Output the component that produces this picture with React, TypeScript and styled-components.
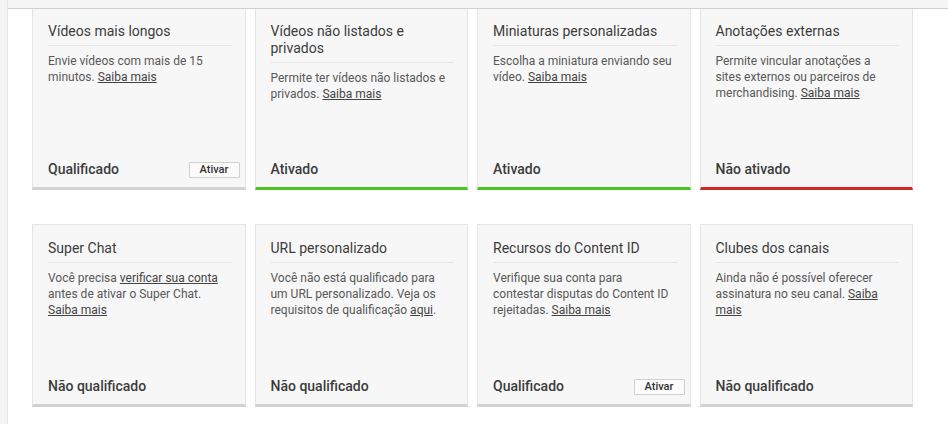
import { ReactElement } from 'react';
import styled, { createGlobalStyle } from 'styled-components';

const GlobalStyle = createGlobalStyle`
  html, body {
    margin: 0;
    padding: 0;
    background: #ffffff;
    font-family: Roboto, "Noto Sans", Arial, sans-serif;
  }
`;

const Page = styled.div`
  display: flex;
  min-height: 424px;
`;

const SideStrip = styled.div`
  width: 7px;
  flex: none;
  background: #f4f4f4;
  border-right: 1px solid #e6e6e6;
`;

const Main = styled.div`
  flex: 1;
  display: flex;
  flex-direction: column;
`;

const TopBar = styled.div`
  height: 8px;
  background: #f5f5f5;
  border-bottom: 1px solid #cfcfcf;
  margin-bottom: -2px;
  position: relative;
  z-index: 1;
`;

const Grid = styled.div`
  display: grid;
  grid-template-columns: repeat(4, 1fr);
  column-gap: 9px;
  row-gap: 34px;
  width: 881px;
  margin-left: 24px;
`;

type Tone = 'none' | 'on' | 'off';

const barColor = (tone: Tone): string =>
  tone === 'on' ? '#4cc423' : tone === 'off' ? '#d12a26' : '#d2d2d2';

const Card = styled.div<{ $tone: Tone }>`
  box-sizing: border-box;
  height: 183px;
  display: flex;
  flex-direction: column;
  background: #f7f7f7;
  border: 1px solid #e4e4e4;
  border-bottom: 3px solid ${({ $tone }) => barColor($tone)};
  padding: 15px 13px 0 15px;
`;

const Title = styled.div`
  font-size: 14px;
  line-height: 17px;
  color: #3c3c3c;
  padding-bottom: 5px;
  border-bottom: 1px solid #e4e4e4;
`;

const Desc = styled.div`
  margin-top: 7px;
  padding-right: 3px;
  font-size: 12px;
  line-height: 16px;
  color: #585858;

  a {
    color: #444444;
    text-decoration: underline;
    text-underline-offset: 1px;
  }
`;

const Footer = styled.div`
  margin-top: auto;
  height: 36px;
  display: flex;
  align-items: center;
  justify-content: space-between;
`;

const Status = styled.span`
  font-size: 14px;
  font-weight: 500;
  color: #3c3c3c;
`;

const ActivateButton = styled.button`
  box-sizing: border-box;
  width: 51px;
  height: 16px;
  margin-right: -8px;
  margin-top: 1px;
  padding: 0;
  background: #fbfbfb;
  border: 1px solid #d0d0d0;
  border-radius: 1px;
  font-family: Roboto, Arial, sans-serif;
  font-size: 11px;
  font-weight: 500;
  color: #333333;
  cursor: pointer;
`;

type Feature = {
  title: string;
  desc: ReactElement;
  status: string;
  tone: Tone;
  action?: boolean;
};

const link = (text: string): ReactElement => <a href="#">{text}</a>;

const features: Feature[] = [
  {
    title: 'Vídeos mais longos',
    desc: <>Envie vídeos com mais de 15 minutos. {link('Saiba mais')}</>,
    status: 'Qualificado',
    tone: 'none',
    action: true,
  },
  {
    title: 'Vídeos não listados e privados',
    desc: <>Permite ter vídeos não listados e privados. {link('Saiba mais')}</>,
    status: 'Ativado',
    tone: 'on',
  },
  {
    title: 'Miniaturas personalizadas',
    desc: <>Escolha a miniatura enviando seu vídeo. {link('Saiba mais')}</>,
    status: 'Ativado',
    tone: 'on',
  },
  {
    title: 'Anotações externas',
    desc: (
      <>
        Permite vincular anotações a sites externos ou parceiros de merchandising.{' '}
        {link('Saiba mais')}
      </>
    ),
    status: 'Não ativado',
    tone: 'off',
  },
  {
    title: 'Super Chat',
    desc: (
      <>
        Você precisa {link('verificar sua conta')} antes de ativar o Super Chat.{' '}
        {link('Saiba mais')}
      </>
    ),
    status: 'Não qualificado',
    tone: 'none',
  },
  {
    title: 'URL personalizado',
    desc: (
      <>
        Você não está qualificado para um URL personalizado. Veja os requisitos de
        qualificação {link('aqui')}.
      </>
    ),
    status: 'Não qualificado',
    tone: 'none',
  },
  {
    title: 'Recursos do Content ID',
    desc: (
      <>
        Verifique sua conta para contestar disputas do Content ID rejeitadas.{' '}
        {link('Saiba mais')}
      </>
    ),
    status: 'Qualificado',
    tone: 'none',
    action: true,
  },
  {
    title: 'Clubes dos canais',
    desc: (
      <>
        Ainda não é possível oferecer assinatura no seu canal. {link('Saiba mais')}
      </>
    ),
    status: 'Não qualificado',
    tone: 'none',
  },
];

const FeatureCard = ({ feature }: { feature: Feature }): ReactElement => (
  <Card $tone={feature.tone}>
    <Title>{feature.title}</Title>
    <Desc>{feature.desc}</Desc>
    <Footer>
      <Status>{feature.status}</Status>
      {feature.action && <ActivateButton>Ativar</ActivateButton>}
    </Footer>
  </Card>
);

export default function App(): ReactElement {
  return (
    <>
      <GlobalStyle />
      <Page>
        <SideStrip />
        <Main>
          <TopBar />
          <Grid>
            {features.map((f) => (
              <FeatureCard key={f.title} feature={f} />
            ))}
          </Grid>
        </Main>
      </Page>
    </>
  );
}
